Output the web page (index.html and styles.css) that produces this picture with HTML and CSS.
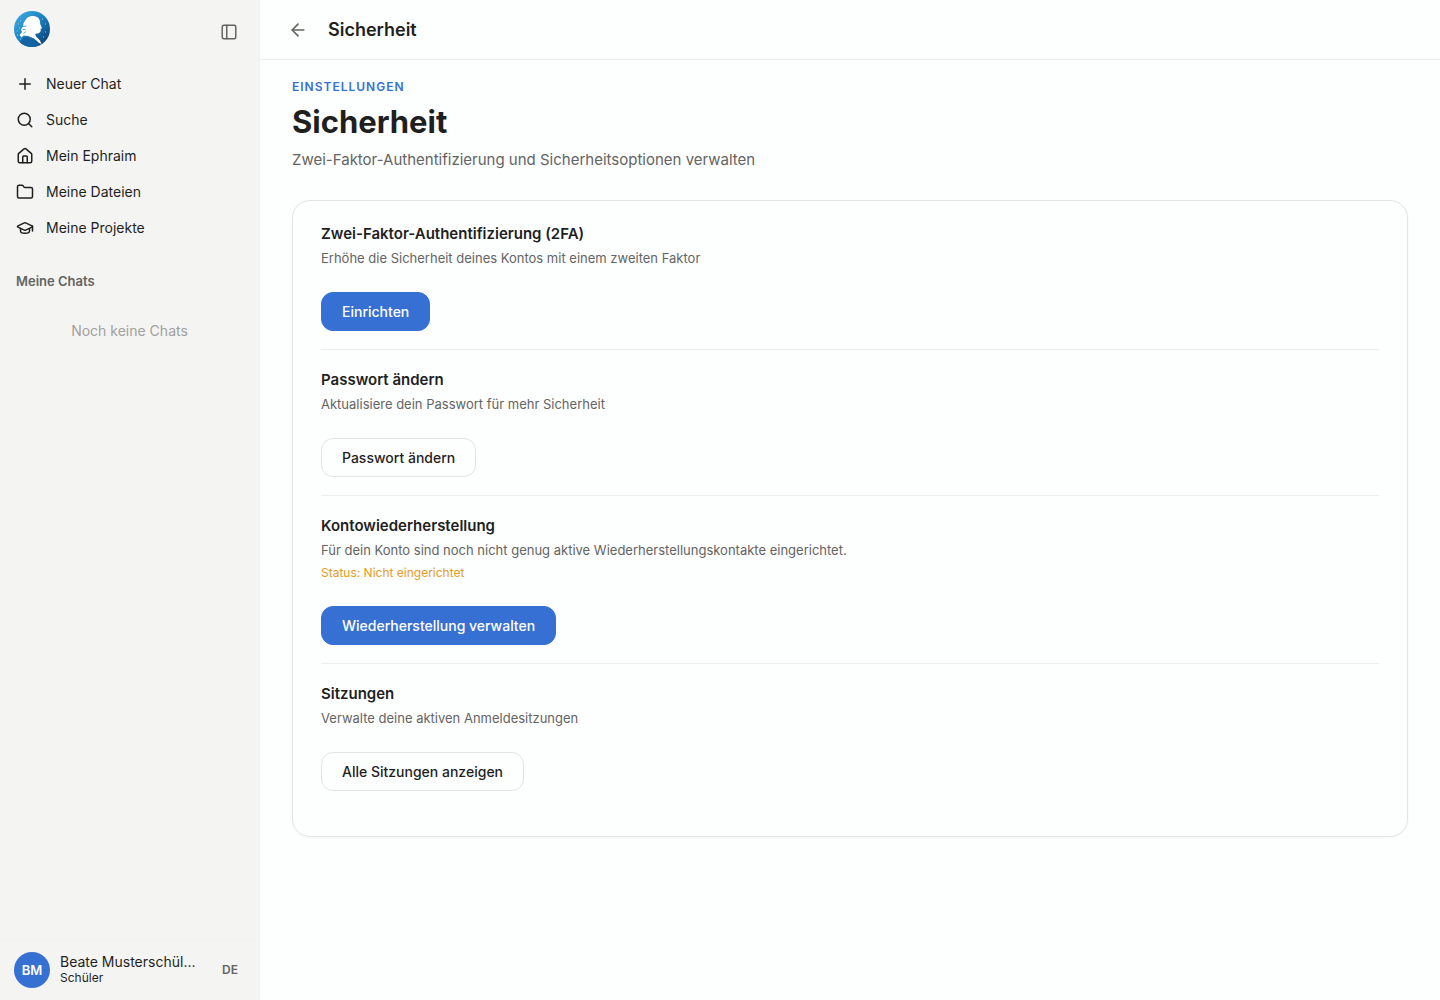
FILE: index.html
```
<!DOCTYPE html>
<html lang="de">
<head>
  <meta charset="UTF-8">
  <meta name="viewport" content="width=device-width, initial-scale=1.0">
  <title>Sicherheit - Ephraim</title>
  <link rel="stylesheet" href="styles.css">
</head>
<body>
  <div class="app">
    <!-- Sidebar -->
    <aside class="sidebar">
      <div class="sidebar-header">
        <a href="#" class="logo" aria-label="Ephraim">
          <svg width="36" height="36" viewBox="0 0 36 36">
            <defs>
              <linearGradient id="logoBg" x1="0" y1="0" x2="1" y2="1">
                <stop offset="0" stop-color="#45b0e4"/>
                <stop offset="0.5" stop-color="#1a7fc0"/>
                <stop offset="1" stop-color="#08305f"/>
              </linearGradient>
              <clipPath id="logoClip"><circle cx="18" cy="18" r="18"/></clipPath>
            </defs>
            <g clip-path="url(#logoClip)">
              <rect width="36" height="36" fill="url(#logoBg)"/>
              <path d="M11.500 9C13 5.800 16 4.800 19.500 5C23 5.200 25.500 7 26 10.500L26.200 13L28 17L26.600 18L26.800 20L25.600 21.600C24.500 23 22.500 22.200 21.200 23L22 25.500L26 29.500L27.500 33L25 32L20 27.500L14 25L9.500 24.500L7.500 26.500L5.500 24L8 21L6.800 18.500L9 15.500L9.500 12Z" fill="#fff"/>
              <path d="M9 15.500L12.500 15M8.500 18.500L11.500 18.500M12 20.500L9.500 22.500" fill="none" stroke="#5aa9d6" stroke-width="1"/>
              <path d="M10 26L15 26.500L19.500 29L25 34L21 36H12L5 32Z" fill="#1464a5"/>
              <path d="M4 13h1M5 17h1M3 20h1M6 10h1M3 24h1M6 28h1M28 8h1M31 13h1M31 21h1M29 26h1" stroke="#8ed0ee" stroke-width="1"/>
            </g>
          </svg>
        </a>
        <button type="button" class="icon-button" aria-label="Seitenleiste einklappen">
          <svg class="icon" width="18" height="18" viewBox="0 0 24 24">
            <rect x="3" y="3" width="18" height="18" rx="2"/>
            <path d="M9 3v18"/>
          </svg>
        </button>
      </div>

      <nav class="nav">
        <a href="#" class="nav-item">
          <svg class="icon" width="18" height="18" viewBox="0 0 24 24"><path d="M5 12h14M12 5v14"/></svg>
          Neuer Chat
        </a>
        <a href="#" class="nav-item">
          <svg class="icon" width="18" height="18" viewBox="0 0 24 24"><circle cx="11" cy="11" r="8"/><path d="m21 21-4.300-4.300"/></svg>
          Suche
        </a>
        <a href="#" class="nav-item">
          <svg class="icon" width="18" height="18" viewBox="0 0 24 24"><path d="M15 21v-8a1 1 0 0 0-1-1h-4a1 1 0 0 0-1 1v8"/><path d="M3 10a2 2 0 0 1 .709-1.528l7-5.999a2 2 0 0 1 2.582 0l7 5.999A2 2 0 0 1 21 10v9a2 2 0 0 1-2 2H5a2 2 0 0 1-2-2z"/></svg>
          Mein Ephraim
        </a>
        <a href="#" class="nav-item">
          <svg class="icon" width="18" height="18" viewBox="0 0 24 24"><path d="M20 20a2 2 0 0 0 2-2V8a2 2 0 0 0-2-2h-7.900a2 2 0 0 1-1.690-.9L9.600 3.900A2 2 0 0 0 7.930 3H4a2 2 0 0 0-2 2v13a2 2 0 0 0 2 2z"/></svg>
          Meine Dateien
        </a>
        <a href="#" class="nav-item">
          <svg class="icon" width="18" height="18" viewBox="0 0 24 24"><path d="M21.420 10.920a1 1 0 0 0-.020-1.840L12.830 5.180a2 2 0 0 0-1.660 0L2.600 9.080a1 1 0 0 0 0 1.830l8.570 3.910a2 2 0 0 0 1.660 0z"/><path d="M22 10v6"/><path d="M6 12.500V16a6 3 0 0 0 12 0v-3.500"/></svg>
          Meine Projekte
        </a>
      </nav>

      <h2 class="chats-title">Meine Chats</h2>
      <p class="chats-empty">Noch keine Chats</p>

      <div class="sidebar-footer">
        <div class="avatar">BM</div>
        <div class="user">
          <div class="user-name">Beate Musterschül...</div>
          <div class="user-role">Schüler</div>
        </div>
        <button type="button" class="lang-button">DE</button>
      </div>
    </aside>

    <!-- Content -->
    <main class="main">
      <header class="topbar">
        <button type="button" class="icon-button" aria-label="Zurück">
          <svg class="icon" width="20" height="20" viewBox="0 0 24 24"><path d="m12 19-7-7 7-7"/><path d="M19 12H5"/></svg>
        </button>
        <span class="topbar-title">Sicherheit</span>
      </header>

      <div class="content">
        <div class="eyebrow">Einstellungen</div>
        <h1>Sicherheit</h1>
        <p class="subtitle">Zwei-Faktor-Authentifizierung und Sicherheitsoptionen verwalten</p>

        <div class="card">
          <section class="setting">
            <h3>Zwei-Faktor-Authentifizierung (2FA)</h3>
            <p>Erhöhe die Sicherheit deines Kontos mit einem zweiten Faktor</p>
            <button type="button" class="btn btn-primary">Einrichten</button>
          </section>
          <section class="setting">
            <h3>Passwort ändern</h3>
            <p>Aktualisiere dein Passwort für mehr Sicherheit</p>
            <button type="button" class="btn">Passwort ändern</button>
          </section>
          <section class="setting">
            <h3>Kontowiederherstellung</h3>
            <p>Für dein Konto sind noch nicht genug aktive Wiederherstellungskontakte eingerichtet.</p>
            <p class="status">Status: Nicht eingerichtet</p>
            <button type="button" class="btn btn-primary">Wiederherstellung verwalten</button>
          </section>
          <section class="setting">
            <h3>Sitzungen</h3>
            <p>Verwalte deine aktiven Anmeldesitzungen</p>
            <button type="button" class="btn">Alle Sitzungen anzeigen</button>
          </section>
        </div>
      </div>
    </main>
  </div>
</body>
</html>
```
FILE: styles.css
```
* {
  box-sizing: border-box;
}
body {
  margin: 0;
  font-family: Inter, sans-serif;
  font-size: 14px;
  line-height: 20px;
  color: #1f1f1e;
  background: #fdfefe;
}
h1, h2, h3, p {
  margin: 0;
}
a {
  color: inherit;
  text-decoration: none;
}
button {
  font: inherit;
  color: inherit;
  cursor: pointer;
}
.icon {
  flex: none;
  display: block;
  fill: none;
  stroke: currentColor;
  stroke-width: 2;
  stroke-linecap: round;
  stroke-linejoin: round;
}
.app {
  display: flex;
  min-height: 100vh;
}

/* Sidebar */
.sidebar {
  display: flex;
  flex-direction: column;
  flex: none;
  width: 260px;
  background: #f4f4f3;
  border-right: 1px solid #f0f1f1;
}
.sidebar-header {
  display: flex;
  align-items: center;
  justify-content: space-between;
  padding: 11px 16px 0 14px;
}
.logo svg {
  display: block;
}
.icon-button {
  display: flex;
  align-items: center;
  justify-content: center;
  width: 28px;
  height: 28px;
  padding: 0;
  border: none;
  background: none;
  color: #63635f;
}
.sidebar-header .icon-button {
  margin-top: 6px;
}
.nav {
  padding: 19px 8px 0;
}
.nav-item {
  display: flex;
  align-items: center;
  gap: 12px;
  height: 36px;
  padding: 0 8px;
  border-radius: 8px;
}
.chats-title {
  margin-top: 25px;
  padding: 0 16px;
  font-size: 13px;
  font-weight: 600;
  color: #63635f;
}
.chats-empty {
  margin-top: 30px;
  text-align: center;
  color: #a1a19d;
}
.sidebar-footer {
  display: flex;
  align-items: center;
  gap: 10px;
  margin-top: auto;
  padding: 12px 13px 12px 14px;
  border-top: 1px solid #f1f2f2;
}
.avatar {
  display: flex;
  align-items: center;
  justify-content: center;
  flex: none;
  width: 36px;
  height: 36px;
  border-radius: 50%;
  background: #3670d3;
  color: #fff;
  font-size: 13px;
  font-weight: 600;
}
.user {
  flex: 1;
  min-width: 0;
  line-height: 16px;
}
.user-name {
  white-space: nowrap;
}
.user-role {
  font-size: 12px;
}
.lang-button {
  padding: 4px 8px;
  border: none;
  background: none;
  font-size: 12px;
  font-weight: 600;
  color: #63635f;
}

/* Content */
.main {
  flex: 1;
  min-width: 0;
}
.topbar {
  display: flex;
  align-items: center;
  gap: 16px;
  height: 60px;
  padding: 0 24px;
  border-bottom: 1px solid #ebedec;
}
.topbar-title {
  font-size: 18px;
  font-weight: 600;
  line-height: 24px;
}
.content {
  padding: 18px 32px 32px;
}
.eyebrow {
  font-size: 12px;
  font-weight: 600;
  line-height: 18px;
  letter-spacing: 1px;
  text-transform: uppercase;
  color: #3670d3;
}
h1 {
  margin-top: 6px;
  font-size: 31px;
  font-weight: 700;
  line-height: 40px;
}
.subtitle {
  margin-top: 8px;
  font-size: 15px;
  color: #646463;
}
.card {
  margin-top: 30px;
  padding: 3px 28px 27px;
  border: 1px solid #e2e5e4;
  border-radius: 18px;
  box-shadow: 0 1px 3px rgba(0, 0, 0, 0.04);
}
.setting {
  padding: 18px 0;
}
.setting + .setting {
  border-top: 1px solid #eceeed;
}
.setting h3 {
  font-size: 15px;
  font-weight: 600;
  line-height: 24px;
}
.setting p {
  margin-top: 2px;
  font-size: 13px;
  color: #646463;
}
.setting .status {
  margin-top: 4px;
  font-size: 12px;
  line-height: 18px;
  color: #e69c24;
}
.btn {
  display: block;
  height: 39px;
  margin-top: 24px;
  padding: 0 20px;
  border: 1px solid #e2e5e4;
  border-radius: 12px;
  background: #fdfefe;
  font-weight: 500;
}
.btn-primary {
  border-color: #3670d3;
  background: #3670d3;
  color: #fff;
}
```
